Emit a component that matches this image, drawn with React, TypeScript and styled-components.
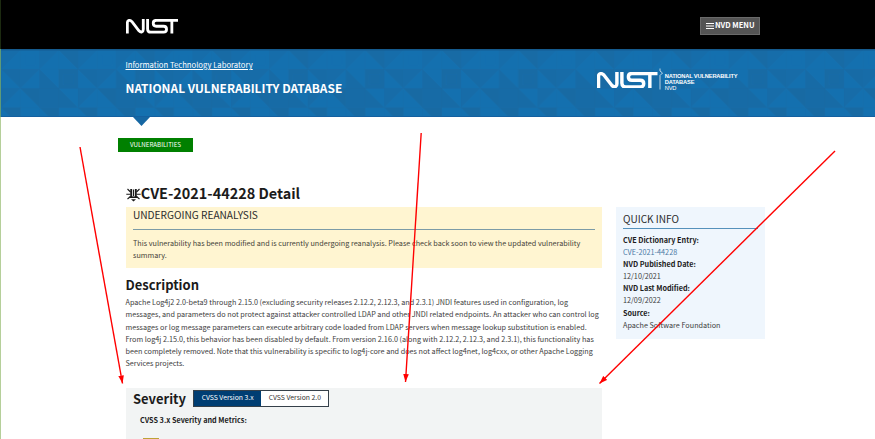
import React from 'react';
import styled, { createGlobalStyle } from 'styled-components';

const GlobalStyle = createGlobalStyle`
  * { box-sizing: border-box; }
  body {
    margin: 0;
    overflow: hidden;
    background: #fff;
    color: #3c3c3c;
    font-family: "Noto Sans CJK SC", "Noto Sans", sans-serif;
    font-size: 7.24px;
    line-height: 12.1px;
  }
  h1, h2, h3, p, dl, dt, dd { margin: 0; }
`;

const Page = styled.div`
  position: relative;
  width: 875px;
  height: 439px;
  overflow: hidden;
`;

const EdgeLine = styled.div`
  position: absolute;
  left: 0;
  top: 0;
  width: 1px;
  height: 100%;
  background: linear-gradient(#1c2a10 0 49px, #5f9a78 49px 117px, #b5cf9a 117px);
`;

const TopBar = styled.header`
  display: flex;
  align-items: flex-start;
  justify-content: space-between;
  height: 49px;
  padding: 17px 115px 0 125.5px;
  background: #000;
`;

const LogoSlot = styled.div`
  display: flex;
  padding-top: 2.3px;
`;

const MenuButton = styled.button`
  display: flex;
  align-items: flex-start;
  gap: 1.5px;
  width: 60px;
  height: 18px;
  padding: 0 0 0 4.5px;
  border: 1px solid #6a6a6a;
  background: #545454;
  color: #fff;
  font: 700 7.5px/14px "Noto Sans CJK SC", sans-serif;
  white-space: nowrap;
  svg { margin-top: 4px; }
`;

const Banner = styled.section`
  display: grid;
  height: 68px;
  background: #1470af;
  > * { grid-area: 1 / 1; }
`;

const BannerContent = styled.div`
  display: flex;
  justify-content: space-between;
  padding: 10px 137.5px 0 125.5px;
  color: #fff;
  z-index: 1;
`;

const LabLink = styled.a`
  display: block;
  font-size: 7.7px;
  line-height: 12px;
  text-decoration: underline;
  text-underline-offset: 1px;
  text-decoration-thickness: 1px;
`;

const SiteTitle = styled.h2`
  padding-top: 7px;
  font-size: 11.9px;
  line-height: 20px;
  white-space: nowrap;
`;

const NvdBrand = styled.div`
  display: flex;
  align-items: flex-start;
  padding-top: 9px;
`;

const BrandMark = styled.div`
  display: flex;
  padding-top: 3.8px;
`;

const BrandText = styled.div`
  padding: 5px 0 0 1px;
  font: 700 5.72px/6px "Liberation Sans", Arial, sans-serif;
  letter-spacing: -0.16px;
  white-space: nowrap;
  span { display: block; font-weight: 400; }
`;

const NavRow = styled.nav`
  display: flex;
  flex-direction: column;
  align-items: flex-start;
  height: 66px;
  padding-left: 118px;
`;

const Pointer = styled.div`
  width: 17px;
  height: 9px;
  margin-left: 15px;
  background: #1667a3;
  clip-path: polygon(0 0, 100% 0, 50% 100%);
`;

const Badge = styled.span`
  width: 75px;
  height: 14px;
  margin-top: 12px;
  background: #008000;
  color: #fff;
  font-size: 6.19px;
  line-height: 13px;
  text-align: center;
`;

const PageTitle = styled.h1`
  display: flex;
  align-items: flex-start;
  height: 24px;
  padding-left: 125.5px;
  color: #1b1b1b;
  font-size: 14.43px;
  line-height: 20px;
  svg { margin: 4px 0.3px 0 0; }
`;

const Columns = styled.main`
  display: flex;
  align-items: flex-start;
  gap: 14px;
  padding-left: 125.5px;
`;

const MainColumn = styled.div`
  width: 476.5px;
  white-space: nowrap;
`;

const Notice = styled.section`
  height: 61px;
  padding: 1px 7px 0 7.5px;
  background: #fff5d1;
`;

const PanelTitle = styled.h3<{ $size: number; $gap: number; $rule: string }>`
  padding-bottom: ${p => p.$gap}px;
  border-bottom: 1px solid ${p => p.$rule};
  color: #2c2c2c;
  font-size: ${p => p.$size}px;
  font-weight: 400;
  line-height: 14px;
`;

const NoticeText = styled.p`
  padding-top: 7px;
  color: #444238;
`;

const SectionTitle = styled.h2`
  color: #1b1b1b;
  font-size: 12.97px;
  line-height: 18px;
`;

const Description = styled.section`
  height: 119.5px;
  padding-top: 8px;
  p { padding-top: 2.4px; }
`;

const SeverityPanel = styled.section`
  height: 60px;
  padding: 2px 7.5px 0;
  background: #f2f4f4;
`;

const SeverityHead = styled.div`
  display: flex;
  align-items: flex-start;
  gap: 7px;
`;

const Tabs = styled.div`
  display: flex;
  width: 136.5px;
  height: 17px;
  border: 1px solid #35404a;
`;

const Tab = styled.span<{ $active?: boolean }>`
  flex: 1;
  background: ${p => (p.$active ? '#003e73' : '#fff')};
  color: ${p => (p.$active ? '#fff' : '#333')};
  font-size: 6.83px;
  line-height: 13.5px;
  text-align: center;
`;

const MetricsLabel = styled.h3`
  padding: 6px 0 0 7px;
  color: #1b1b1b;
  font-size: 7.24px;
`;

const ScoreEdge = styled.div`
  width: 16px;
  height: 8px;
  margin: 12px 0 0 10px;
  background: #bda236;
`;

const QuickInfo = styled.aside`
  width: 149px;
  height: 131.5px;
  padding: 4.5px 7.5px 0 7px;
  background: #eff6fd;
`;

const InfoList = styled.dl`
  padding-top: 5px;
  dt { color: #1b1b1b; font-weight: 700; }
`;

const InfoLink = styled.a`
  color: #4a78a4;
`;

const ArrowLayer = styled.svg`
  position: absolute;
  left: 0;
  top: 0;
`;

function NistLogo({ width, height, weight }: { width: number; height: number; weight: number }) {
  return (
    <svg width={width} height={height} viewBox="0 0 158 44" preserveAspectRatio="none" fill="none" stroke="#fff" strokeWidth={weight}>
      <path d="M4 44V12C4 3 12 2 18 8L39 36C45 42 52 40 52 31V0" />
      <path d="M65 0V30Q65 40 75 40H113Q122 40 122 31Q122 22 113 22H91Q82 22 82 13Q82 4 91 4H158" />
      <path d="M138 4V44" />
    </svg>
  );
}

function BugIcon() {
  return (
    <svg width="15" height="15" viewBox="0 0 15 15" fill="none" stroke="#1b1b1b" strokeWidth="1.1">
      <path d="M1.5 2L4.5 5M13.5 2L10.5 5M0.3 7.2H4.5M10.5 7.2H14.7M1.5 12L4.5 9.5M13.5 12L10.5 9.5" />
      <path d="M5.2 2V10M9.8 2V10" strokeWidth="1.9" />
      <path d="M7.5 2.5V9" strokeWidth="1.1" />
      <path d="M3.6 10.2H11.4" strokeWidth="1.6" />
      <path d="M5 12.2H10L7.5 14.6Z" fill="#1b1b1b" stroke="none" />
    </svg>
  );
}

function MenuIcon() {
  return (
    <svg width="8" height="8" viewBox="0 0 8 8" stroke="#fff" strokeWidth="1.2">
      <path d="M0 1.5H8M0 4H8M0 6.5H8" />
    </svg>
  );
}

function BannerPattern() {
  return (
    <svg width="875" height="68">
      <defs>
        <pattern id="facets" width="76.6" height="76.6" x="1.3" y="1.1" patternUnits="userSpaceOnUse">
          <path d="M0 19.15H19.15V38.3ZM38.3 19.15V57.45L76.6 57.45Z" fill="#176ba6" />
          <path d="M57.45 0H76.6V19.15ZM57.45 19.15H76.6V38.3H57.45Z" fill="#186ba5" />
          <path d="M0 19.15L19.15 0H0ZM38.3 0V19.15L57.45 0Z" fill="#166daa" />
          <path d="M19.15 38.3L38.3 19.15H19.15ZM0 57.45L19.15 38.3H0Z" fill="#176ca8" />
          <path d="M19.15 38.3H38.3V57.45ZM38.3 57.45H57.45V76.6ZM0 57.45H19.15V76.6Z" fill="#186aa3" />
          <path d="M0 0.1H76.6M0 19.15H76.6M0 38.3H76.6M0 57.45H76.6M0.1 0V76.6M19.15 0V76.6M38.3 0V76.6M57.45 0V76.6" stroke="#1a6299" strokeOpacity="0.18" strokeWidth="0.6" />
          <path d="M24 5H34V15H24ZM62 24H72V34H62Z" fill="none" stroke="#0d6ab0" strokeOpacity="0.3" strokeWidth="0.7" />
        </pattern>
      </defs>
      <rect width="875" height="68" fill="url(#facets)" />
      <rect width="875" height="1.4" fill="#155b8e" />
      <rect y="67" width="875" height="1" fill="#1460a0" />
    </svg>
  );
}

const arrows = [
  { from: [80, 147], to: [122.5, 383.5] },
  { from: [421.2, 133], to: [405.5, 382] },
  { from: [835, 151], to: [599.5, 383.5] },
];

function Arrows() {
  return (
    <ArrowLayer width="875" height="439">
      <defs>
        <marker id="head" markerUnits="userSpaceOnUse" markerWidth="8" markerHeight="6" refX="8" refY="3" orient="auto">
          <path d="M0 0.2L8 3L0 5.8Z" fill="#f00" />
        </marker>
      </defs>
      {arrows.map(({ from, to }) => (
        <line key={from[0]} x1={from[0]} y1={from[1]} x2={to[0]} y2={to[1]} stroke="#f00" strokeWidth="1.4" markerEnd="url(#head)" />
      ))}
    </ArrowLayer>
  );
}

export default function App() {
  return (
    <Page>
      <GlobalStyle />
      <TopBar>
        <LogoSlot><NistLogo width={52.5} height={14.5} weight={8.5} /></LogoSlot>
        <MenuButton><MenuIcon />NVD MENU</MenuButton>
      </TopBar>
      <Banner>
        <BannerPattern />
        <BannerContent>
          <div>
            <LabLink>Information Technology Laboratory</LabLink>
            <SiteTitle>NATIONAL VULNERABILITY DATABASE</SiteTitle>
          </div>
          <NvdBrand>
            <BrandMark><NistLogo width={60.5} height={16.5} weight={9} /></BrandMark>
            <svg width="6" height="22" viewBox="0 0 6 22" fill="none" stroke="#fff" strokeWidth="0.7">
              <path d="M2 0.5V3L4.5 5L2 7.5V21.5" />
            </svg>
            <BrandText>NATIONAL VULNERABILITY<br />DATABASE<span>NVD</span></BrandText>
          </NvdBrand>
        </BannerContent>
      </Banner>
      <NavRow>
        <Pointer />
        <Badge>VULNERABILITIES</Badge>
      </NavRow>
      <PageTitle><BugIcon />CVE-2021-44228 Detail</PageTitle>
      <Columns>
        <MainColumn>
          <Notice>
            <PanelTitle $size={10.13} $gap={7} $rule="#7c9ba6">UNDERGOING REANALYSIS</PanelTitle>
            <NoticeText>
              This vulnerability has been modified and is currently undergoing reanalysis. Please check back soon to view the updated vulnerability<br />
              summary.
            </NoticeText>
          </Notice>
          <Description>
            <SectionTitle>Description</SectionTitle>
            <p>
              Apache Log4j2 2.0-beta9 through 2.15.0 (excluding security releases 2.12.2, 2.12.3, and 2.3.1) JNDI features used in configuration, log<br />
              messages, and parameters do not protect against attacker controlled LDAP and other JNDI related endpoints. An attacker who can control log<br />
              messages or log message parameters can execute arbitrary code loaded from LDAP servers when message lookup substitution is enabled.<br />
              From log4j 2.15.0, this behavior has been disabled by default. From version 2.16.0 (along with 2.12.2, 2.12.3, and 2.3.1), this functionality has<br />
              been completely removed. Note that this vulnerability is specific to log4j-core and does not affect log4net, log4cxx, or other Apache Logging<br />
              Services projects.
            </p>
          </Description>
          <SeverityPanel>
            <SeverityHead>
              <SectionTitle>Severity</SectionTitle>
              <Tabs>
                <Tab $active>CVSS Version 3.x</Tab>
                <Tab>CVSS Version 2.0</Tab>
              </Tabs>
            </SeverityHead>
            <MetricsLabel>CVSS 3.x Severity and Metrics:</MetricsLabel>
            <ScoreEdge />
          </SeverityPanel>
        </MainColumn>
        <QuickInfo>
          <PanelTitle $size={10.07} $gap={2.5} $rule="#5591bb">QUICK INFO</PanelTitle>
          <InfoList>
            <dt>CVE Dictionary Entry:</dt>
            <dd><InfoLink>CVE-2021-44228</InfoLink></dd>
            <dt>NVD Published Date:</dt>
            <dd>12/10/2021</dd>
            <dt>NVD Last Modified:</dt>
            <dd>12/09/2022</dd>
            <dt>Source:</dt>
            <dd>Apache Software Foundation</dd>
          </InfoList>
        </QuickInfo>
      </Columns>
      <EdgeLine />
      <Arrows />
    </Page>
  );
}
